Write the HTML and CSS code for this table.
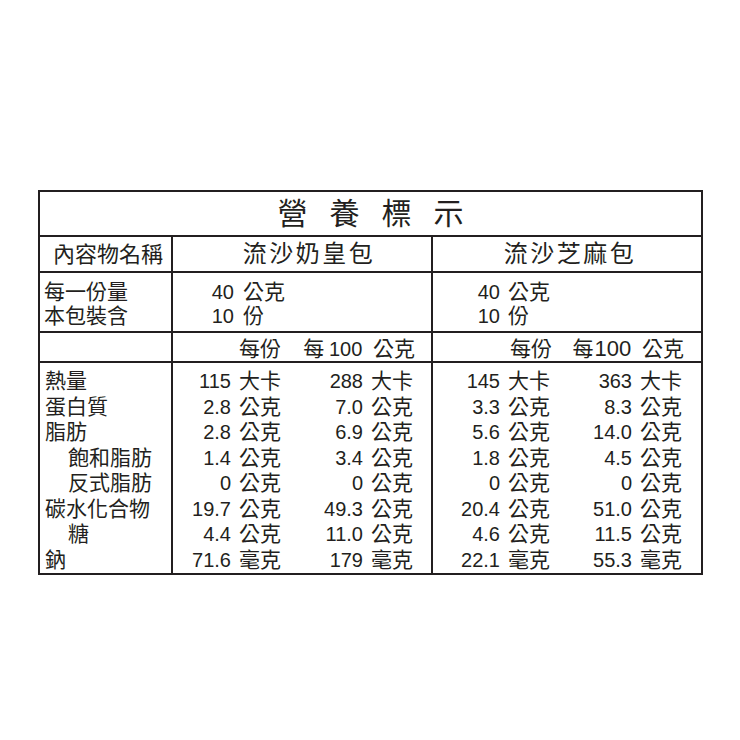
FILE: index.html
```html
<!DOCTYPE html>
<html lang="zh-Hant">
<head>
<meta charset="utf-8">
<title>營養標示</title>
<link rel="stylesheet" href="styles.css">
</head>
<body>
<div class="sheet">
  <div class="label">
    <div class="cell title">營養標示</div>

    <div class="cell name-head">內容物名稱</div>
    <div class="cell name name-a">流沙奶皇包</div>
    <div class="cell name name-b">流沙芝麻包</div>

    <div class="cell serve-labels">
      <div>每一份量</div>
      <div>本包裝含</div>
    </div>
    <div class="cell serve serve-a">
      <span class="num">40</span><span class="unit">公克</span>
      <span class="num">10</span><span class="unit">份</span>
    </div>
    <div class="cell serve serve-b">
      <span class="num">40</span><span class="unit">公克</span>
      <span class="num">10</span><span class="unit">份</span>
    </div>

    <div class="cell"></div>
    <div class="cell hdr hdr-a">
      <span class="h1">每份</span>
      <span class="h2">每 <span class="num">100</span> 公克</span>
    </div>
    <div class="cell hdr hdr-b">
      <span class="h1">每份</span>
      <span class="h2">每<span class="num">100</span> 公克</span>
    </div>

    <div class="cell items">
      <div>熱量</div>
      <div>蛋白質</div>
      <div>脂肪</div>
      <div class="sub">飽和脂肪</div>
      <div class="sub">反式脂肪</div>
      <div>碳水化合物</div>
      <div class="sub">糖</div>
      <div>鈉</div>
    </div>

    <div class="cell vals vals-a">
      <span class="num">115</span><span class="unit">大卡</span><span class="num">288</span><span class="unit">大卡</span>
      <span class="num">2.8</span><span class="unit">公克</span><span class="num">7.0</span><span class="unit">公克</span>
      <span class="num">2.8</span><span class="unit">公克</span><span class="num">6.9</span><span class="unit">公克</span>
      <span class="num">1.4</span><span class="unit">公克</span><span class="num">3.4</span><span class="unit">公克</span>
      <span class="num">0</span><span class="unit">公克</span><span class="num">0</span><span class="unit">公克</span>
      <span class="num">19.7</span><span class="unit">公克</span><span class="num">49.3</span><span class="unit">公克</span>
      <span class="num">4.4</span><span class="unit">公克</span><span class="num">11.0</span><span class="unit">公克</span>
      <span class="num">71.6</span><span class="unit">毫克</span><span class="num">179</span><span class="unit">毫克</span>
    </div>

    <div class="cell vals vals-b">
      <span class="num">145</span><span class="unit">大卡</span><span class="num">363</span><span class="unit">大卡</span>
      <span class="num">3.3</span><span class="unit">公克</span><span class="num">8.3</span><span class="unit">公克</span>
      <span class="num">5.6</span><span class="unit">公克</span><span class="num">14.0</span><span class="unit">公克</span>
      <span class="num">1.8</span><span class="unit">公克</span><span class="num">4.5</span><span class="unit">公克</span>
      <span class="num">0</span><span class="unit">公克</span><span class="num">0</span><span class="unit">公克</span>
      <span class="num">20.4</span><span class="unit">公克</span><span class="num">51.0</span><span class="unit">公克</span>
      <span class="num">4.6</span><span class="unit">公克</span><span class="num">11.5</span><span class="unit">公克</span>
      <span class="num">22.1</span><span class="unit">毫克</span><span class="num">55.3</span><span class="unit">毫克</span>
    </div>
  </div>
</div>
</body>
</html>
```

FILE: styles.css
```css
body {
  margin: 0;
  background: #ffffff;
  color: #231f20;
  font-family: "Noto Sans CJK TC", "Liberation Sans", sans-serif;
}

.sheet {
  padding: 190px 0 0 38px;
}

.label {
  display: grid;
  grid-template-columns: 131px 258px 268px;
  grid-template-rows: 43px 34px 58px 28px 210px;
  gap: 2px;
  padding: 2px;
  background: #231f20;
  width: max-content;
}

.cell {
  background: #ffffff;
  white-space: nowrap;
}

.num {
  font-family: "Liberation Sans", Arial, sans-serif;
  font-size: 20px;
}

.title {
  grid-column: 1 / -1;
  text-align: center;
  font-size: 30px;
  line-height: 38px;
  letter-spacing: 22px;
  padding-left: 22px;
}

.name-head {
  font-size: 22px;
  line-height: 30px;
  text-align: center;
  padding-left: 5px;
}

.name {
  font-size: 24px;
  line-height: 30px;
  letter-spacing: 2.5px;
  text-align: center;
}

.name-a {
  padding-left: 14px;
}

.name-b {
  padding-left: 6px;
}

.serve-labels {
  font-size: 21px;
  line-height: 24px;
  padding: 5px 0 0 4px;
}

.serve {
  display: grid;
  grid-auto-rows: 24px;
  align-items: baseline;
  align-content: start;
  padding-top: 5px;
  font-size: 21px;
  line-height: 24px;
}

.serve-a {
  grid-template-columns: 70px auto;
}

.serve-b {
  grid-template-columns: 75px auto;
}

.serve .num {
  text-align: right;
  padding-right: 9px;
}

.serve-b .num {
  padding-right: 8px;
}

.hdr {
  display: grid;
  align-items: baseline;
  font-size: 21px;
  line-height: 28px;
}

.hdr-a {
  grid-template-columns: 66px 44px 88px 44px;
}

.hdr-b {
  grid-template-columns: 75px 44px 88px 44px;
}

.h1 {
  grid-column: 2;
}

.hdr-b .h1 {
  padding-left: 2px;
}

.h2 {
  grid-column: 3 / 5;
  text-align: right;
}

.hdr .num {
  line-height: 1;
  margin-right: 6px;
}

.hdr-b .num {
  font-size: 22px;
  margin-left: 1px;
}

.items {
  font-size: 21px;
  line-height: 25.5px;
  padding: 4px 0 0 5px;
}

.items .sub {
  padding-left: 23px;
}

.vals {
  display: grid;
  grid-auto-rows: 25.5px;
  align-items: baseline;
  align-content: start;
  padding-top: 4px;
  font-size: 21px;
  line-height: 25.5px;
}

.vals-a {
  grid-template-columns: 66px 44px 88px 44px;
}

.vals-b {
  grid-template-columns: 75px 44px 88px 44px;
}

.vals .num {
  text-align: right;
  padding-right: 8px;
}
```
